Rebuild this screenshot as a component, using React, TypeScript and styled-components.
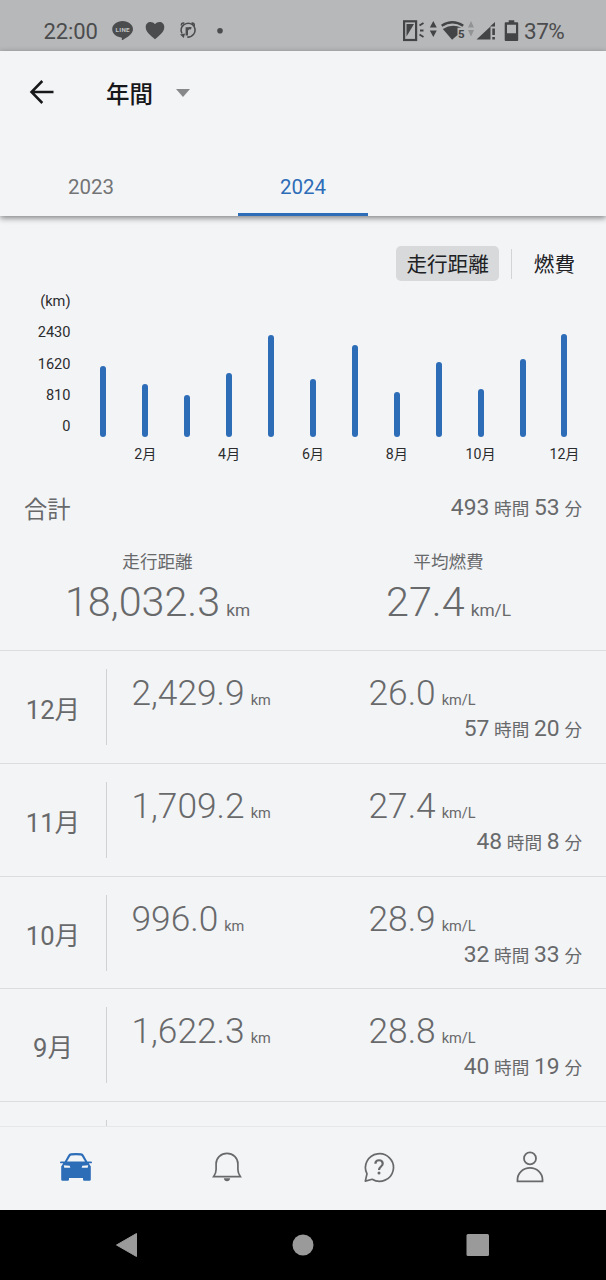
import React from "react";
import styled, { createGlobalStyle } from "styled-components";

const GlobalStyle = createGlobalStyle`
  * { box-sizing: border-box; }
  html, body { margin: 0; padding: 0; background: #f3f4f6; }
  body {
    font-family: Roboto, "Noto Sans CJK JP", sans-serif;
    color: #202124;
    overflow: hidden;
  }
  svg { display: block; flex: none; }
`;

const BLUE = "#2d6db8";
const GREY = "#68696b";

const Screen = styled.div`
  width: 606px;
  height: 1280px;
  display: flex;
  flex-direction: column;
  overflow: hidden;
  background: #f3f4f6;
`;

/* ---------- status bar ---------- */

const StatusBar = styled.header`
  flex: none;
  height: 51px;
  display: flex;
  align-items: center;
  padding: 11px 41px 0 43.5px;
  background: #b7b8b9;
  color: #4b4c4e;
  font-size: 22.5px;
  line-height: 40px;
`;

const Clock = styled.span`
  width: 68.5px;
  margin-top: 1px;
  font-size: 22px;
  letter-spacing: -0.1px;
`;

const Notifications = styled.div`
  flex: 1;
`;

const Battery = styled.span`
  width: 41px;
  margin-left: 5px;
  letter-spacing: -0.5px;
`;

/* ---------- title and year tabs ---------- */

const TopPanel = styled.div`
  position: relative;
  flex: none;
  height: 165px;
  display: flex;
  flex-direction: column;
  background: #f3f4f6;
  box-shadow: 0 2px 6px rgba(0, 0, 0, 0.48);
`;

const TitleBar = styled.div`
  height: 84px;
  display: flex;
  align-items: center;
  padding: 0 0 2px 29px;
`;

const Title = styled.h1`
  margin: 5px 23px 0 51px;
  font-size: 23.5px;
  line-height: 30px;
  font-weight: 500;
  color: #17181a;
`;

const Caret = styled.span`
  border: 7px solid transparent;
  border-top: 8px solid #87888a;
  border-bottom: 0;
  margin-top: 1px;
`;

const Tabs = styled.nav`
  flex: 1;
  display: flex;
  padding-left: 26px;
`;

const Tab = styled.button<{ $active?: boolean }>`
  width: 130px;
  height: 81px;
  margin: 0 82px 0 0;
  padding: 26px 0 0;
  border: 0;
  border-bottom: 3px solid ${(p) => (p.$active ? BLUE : "transparent")};
  background: none;
  font: 400 20.5px/52px Roboto, sans-serif;
  color: ${(p) => (p.$active ? BLUE : "#737476")};
`;

/* ---------- chart ---------- */

const Content = styled.main`
  flex: 1;
  min-height: 0;
  overflow: hidden;
  display: flex;
  flex-direction: column;
`;

const MetricSwitch = styled.div`
  flex: none;
  display: flex;
  justify-content: flex-end;
  align-items: center;
  height: 35px;
  margin: 30px 21px 0 0;
`;

const MetricOption = styled.button<{ $selected?: boolean }>`
  height: 35px;
  padding: 4px 10px 0;
  border: 0;
  border-radius: 5px;
  background: ${(p) => (p.$selected ? "#d8d9da" : "transparent")};
  font: 400 20.6px/31px Roboto, "Noto Sans CJK JP", sans-serif;
  color: #202124;
`;

const OptionDivider = styled.span`
  width: 1px;
  height: 30px;
  margin: 0 12px;
  background: #d3d4d6;
`;

const Chart = styled.section`
  flex: none;
  display: flex;
  height: 207px;
  padding-top: 5px;
  font-size: 14.6px;
  color: #2b2c2e;
`;

const YAxis = styled.div`
  width: 70.5px;
  display: flex;
  flex-direction: column;
  text-align: right;
  line-height: 31.35px;
`;

const Plot = styled.div`
  display: flex;
  margin-left: 11.9px;
  height: 178px;
`;

const Month = styled.div`
  width: 41.93px;
  display: flex;
  flex-direction: column;
  align-items: center;
  justify-content: flex-end;
`;

const Bar = styled.div<{ $h: number }>`
  width: 6px;
  height: ${(p) => p.$h}px;
  border-radius: 3px;
  background: ${BLUE};
`;

const MonthLabel = styled.span`
  height: 20px;
  margin-top: 7.5px;
  line-height: 21px;
  font-size: 14.2px;
  white-space: nowrap;
`;

/* ---------- totals ---------- */

const Totals = styled.section`
  flex: none;
  height: 163px;
  color: ${GREY};
  border-bottom: 1px solid #dcdde0;
`;

const TotalsHead = styled.div`
  display: flex;
  justify-content: space-between;
  align-items: center;
  height: 40px;
  padding: 0 24px;
`;

const TotalsLabel = styled.h2`
  margin: 3px 0 0;
  font-weight: 400;
  font-size: 23.3px;
  line-height: 36px;
`;

const TotalsGrid = styled.div`
  display: grid;
  grid-template-columns: 291px 291px;
  padding: 23px 0 0 12px;
  text-align: center;
`;

const Caption = styled.div`
  font-size: 17.6px;
  line-height: 22px;
`;

const Figure = styled.div<{ $size: number; $unit: number }>`
  font-size: ${(p) => p.$size}px;
  font-weight: 300;
  white-space: nowrap;
  small {
    margin-left: 6px;
    font-size: ${(p) => p.$unit}px;
    font-weight: 400;
  }
`;

const TotalFigure = styled(Figure)`
  margin-top: 4px;
  line-height: 50px;
`;

const DurationText = styled.div`
  font-size: 22.8px;
  line-height: 24px;
  text-align: right;
  white-space: nowrap;
  word-spacing: -0.9px;
  color: ${GREY};
  small {
    font-size: 17.6px;
  }
`;

/* ---------- monthly list ---------- */

const Row = styled.article`
  flex: none;
  height: 112.75px;
  display: flex;
  padding-right: 24px;
  color: ${GREY};
  border-bottom: 1px solid #dcdde0;
`;

const RowMonth = styled.div`
  width: 107px;
  height: 76px;
  margin-top: 18px;
  border-right: 1px solid #d0d1d3;
  text-align: center;
  font-size: 25.6px;
  line-height: 82px;
`;

const RowData = styled.div`
  flex: 1;
  padding: 22px 0 0 24.5px;
`;

const RowFigures = styled.div`
  display: grid;
  grid-template-columns: 237px 1fr;
  line-height: 40px;
  margin-bottom: -4px;
`;

/* ---------- bottom bars ---------- */

const BottomNav = styled.nav`
  flex: none;
  height: 84px;
  display: grid;
  grid-template-columns: repeat(4, 1fr);
  place-items: center;
  padding-bottom: 3px;
  border-top: 1px solid #e6e7e9;
  background: #f3f4f6;
`;

const SystemNav = styled.footer`
  flex: none;
  height: 70.5px;
  display: flex;
  align-items: center;
  justify-content: center;
  background: #000;
`;

const barHeights = [70.5, 52.5, 41.5, 64, 101.5, 58, 91.5, 44.5, 74.5, 48, 78, 103];

const rows = [
  { month: "12月", km: "2,429.9", eco: "26.0", h: 57, m: 20 },
  { month: "11月", km: "1,709.2", eco: "27.4", h: 48, m: 8 },
  { month: "10月", km: "996.0", eco: "28.9", h: 32, m: 33 },
  { month: "9月", km: "1,622.3", eco: "28.8", h: 40, m: 19 },
];

const Duration = ({ h, m }: { h: number; m: number }) => (
  <DurationText>
    {h} <small>時間</small> {m} <small>分</small>
  </DurationText>
);

const NotificationIcons = () => (
  <svg width="120" height="24" viewBox="112 19 120 24" fill="#4b4c4e">
    <path d="M122.6 21c-5.8 0-10.4 3.7-10.4 8.3 0 4.2 3.8 7.6 8.9 8.2 1 .2.9.8.7 2 0 .6.3.8 1 .4 3.4-1.9 10.2-5.800 10.200-10.600 0-4.600-4.600-8.300-10.400-8.300z" />
    <text x="122.600" y="31.600" fontSize="6.200" fontWeight="700" textAnchor="middle" fill="#c4c5c6" textLength="14">LINE</text>
    <path d="M155 39.300l-1.800-1.500c-5-4.400-7.500-7-7.500-10.800 0-3 2.200-5 4.800-5 1.700 0 3.400.8 4.500 2.200 1.100-1.400 2.800-2.200 4.500-2.200 2.600 0 4.800 2 4.800 5 0 3.800-2.500 6.400-7.500 10.800z" />
    <g fill="none" stroke="#4b4c4e" strokeWidth="1.600">
      <path d="M182 33.500c-1.600-3.300-.7-6.900 2-8.900 2.700-1.700 6-1.700 8.500 0 3 2.300 3.400 6.500 1.200 9.500-1.500 2-3.800 3.100-6.400 3" />
      <path d="M181.500 25.500c-.4-2 1-3 2.800-2.300M191.500 23.200c1.900-.5 3.200.8 2.600 2.700" />
      <path d="M186.800 27.200v8.300M187 30.200c.5-1.800 2.300-2.600 4.300-1.800" strokeWidth="2.400" />
    </g>
    <path d="M180 34.500l5-1-1.200 4.500z" />
    <circle cx="220" cy="30.700" r="2.800" />
  </svg>
);

const SystemIcons = () => (
  <svg width="117" height="24" viewBox="402 19 117 24" fill="#434446">
    <rect x="404.100" y="21.300" width="12" height="18.700" fill="none" stroke="#434446" strokeWidth="2.200" />
    <path d="M406.500 24h7.500l-7.500 12.500z" />
    <path d="M419.500 25.500l4-2.500M420 30.500h3.500M419.500 34.500l4 2.500" stroke="#434446" strokeWidth="1.900" />
    <path d="M433.300 21l3.500 6.500h-7zM433.300 37l3.500-6.500h-7z" />
    <path d="M441.700 25.700q10.600-7 21.500 0" fill="none" stroke="#434446" strokeWidth="2.400" />
    <path d="M442.800 29q9.500-6 18.500-1.200h-3.800v7.200l-5.400 4.800z" />
    <text x="458" y="38" fontSize="11.500" fontWeight="700">5</text>
    <path d="M471 21l3 6.500h-6zM471 36.500l3-6.500h-6z" fill="#929395" />
    <path d="M476.500 39.500l14-13v13zM490 26.500l5-4.500v4.500z" />
    <path d="M492.300 28.500h2.600v6.500h-2.600zM492.300 37h2.600v2.500h-2.600z" />
    <path fillRule="evenodd" d="M508.700 20.300h5.600v2h2.900a1 1 0 0 1 1 1v16.700a1 1 0 0 1-1 1h-11.500a1 1 0 0 1-1-1v-16.700a1 1 0 0 1 1-1h3zM507 24.800v8.500h9v-8.500z" />
  </svg>
);

const CarIcon = () => (
  <svg width="34" height="30" viewBox="0 0 34 30">
    <path fill={BLUE} fillRule="evenodd" d="M9.200 3.300Q10 1.500 12 1.300q5-.6 10 0 2 .2 2.800 2l3.500 6.200H32q1 0 1 .9t-1 .9h-2.200l2 3.200v13q0 1.300-1.300 1.300h-5.200q-1.300 0-1.300-1.300v-1.500H10v1.500q0 1.300-1.300 1.300H3.500q-1.300 0-1.300-1.300v-13l2-3.200H2q-1 0-1-.9t1-.9h3.700zM11 4.400L8 9.500h18l-3-5.100q-.5-.9-1.500-1-4.500-.5-9 0-1 .1-1.500 1zM4.800 13.300l.5 2.400h6l-.6-2zM29.200 13.300l-.5 2.400h-6l.6-2z" />
  </svg>
);

const BellIcon = () => (
  <svg width="30" height="32" viewBox="0 0 30 32">
    <path d="M1.700 25.600c1.400-2 2.400-4 2.400-7v-5.800a10.900 10.500 0 0 1 21.800 0v5.800c0 3 1 5 2.400 7z" fill="none" stroke={GREY} strokeWidth="1.700" />
    <path d="M11.800 27.300h6.400c-.3 2-1.500 3-3.200 3s-2.900-1-3.200-3z" fill={GREY} />
  </svg>
);

const HelpIcon = () => (
  <svg width="32" height="32" viewBox="0 0 32 32">
    <path d="M2.300 30.100l1.700-7.300A14 13.800 0 1 1 9.200 28.300z" fill="none" stroke={GREY} strokeWidth="1.700" strokeLinejoin="round" />
    <path d="M12.400 12.700c0-4.600 7.300-4.600 7.300 0 0 2.700-3.700 3-3.700 6.300" fill="none" stroke={GREY} strokeWidth="2.200" />
    <circle cx="16" cy="22" r="1.500" fill={GREY} />
  </svg>
);

const PersonIcon = () => (
  <svg width="30" height="32" viewBox="0 0 30 32">
    <g fill="none" stroke={GREY} strokeWidth="1.800">
      <circle cx="15" cy="7.400" r="6" />
      <path d="M2.500 30.300v-1.700a12.500 11.700 0 0 1 25 0v1.700z" />
    </g>
  </svg>
);

export default function App() {
  return (
    <Screen>
      <GlobalStyle />
      <StatusBar>
        <Clock>22:00</Clock>
        <Notifications>
          <NotificationIcons />
        </Notifications>
        <SystemIcons />
        <Battery>37%</Battery>
      </StatusBar>

      <TopPanel>
        <TitleBar>
          <svg width="26" height="26" viewBox="0 0 26 26" fill="none" stroke="#17181a" strokeWidth="2.500">
            <path d="M13.300 2L2.500 13l10.800 11M2.500 13H24.500" />
          </svg>
          <Title>年間</Title>
          <Caret />
        </TitleBar>
        <Tabs>
          <Tab>2023</Tab>
          <Tab $active>2024</Tab>
        </Tabs>
      </TopPanel>

      <Content>
        <MetricSwitch>
          <MetricOption $selected>走行距離</MetricOption>
          <OptionDivider />
          <MetricOption>燃費</MetricOption>
        </MetricSwitch>

        <Chart>
          <YAxis>
            <span>(km)</span>
            <span>2430</span>
            <span>1620</span>
            <span>810</span>
            <span>0</span>
          </YAxis>
          <Plot>
            {barHeights.map((h, i) => (
              <Month key={i}>
                <Bar $h={h} />
                <MonthLabel>{i % 2 === 1 ? `${i + 1}月` : ""}</MonthLabel>
              </Month>
            ))}
          </Plot>
        </Chart>

        <Totals>
          <TotalsHead>
            <TotalsLabel>合計</TotalsLabel>
            <Duration h={493} m={53} />
          </TotalsHead>
          <TotalsGrid>
            <div>
              <Caption>走行距離</Caption>
              <TotalFigure $size={41.3} $unit={17.3}>
                18,032.3<small>km</small>
              </TotalFigure>
            </div>
            <div>
              <Caption>平均燃費</Caption>
              <TotalFigure $size={41.3} $unit={17.3}>
                27.4<small>km/L</small>
              </TotalFigure>
            </div>
          </TotalsGrid>
        </Totals>

        {rows.map((r) => (
          <Row key={r.month}>
            <RowMonth>{r.month}</RowMonth>
            <RowData>
              <RowFigures>
                <Figure $size={35.3} $unit={14.5}>
                  {r.km}
                  <small>km</small>
                </Figure>
                <Figure $size={35.3} $unit={14.5}>
                  {r.eco}
                  <small>km/L</small>
                </Figure>
              </RowFigures>
              <Duration h={r.h} m={r.m} />
            </RowData>
          </Row>
        ))}
        <Row>
          <RowMonth />
        </Row>
      </Content>

      <BottomNav>
        <CarIcon />
        <BellIcon />
        <HelpIcon />
        <PersonIcon />
      </BottomNav>

      <SystemNav>
        <svg width="376" height="26" viewBox="115 1232 376 26" fill="#9a9a9a">
          <path d="M116.500 1245l20-11.500v23z" stroke="#9a9a9a" strokeLinejoin="round" />
          <circle cx="303" cy="1245" r="10.500" />
          <rect x="466.500" y="1234" width="22.500" height="22" rx="1.500" />
        </svg>
      </SystemNav>
    </Screen>
  );
}
